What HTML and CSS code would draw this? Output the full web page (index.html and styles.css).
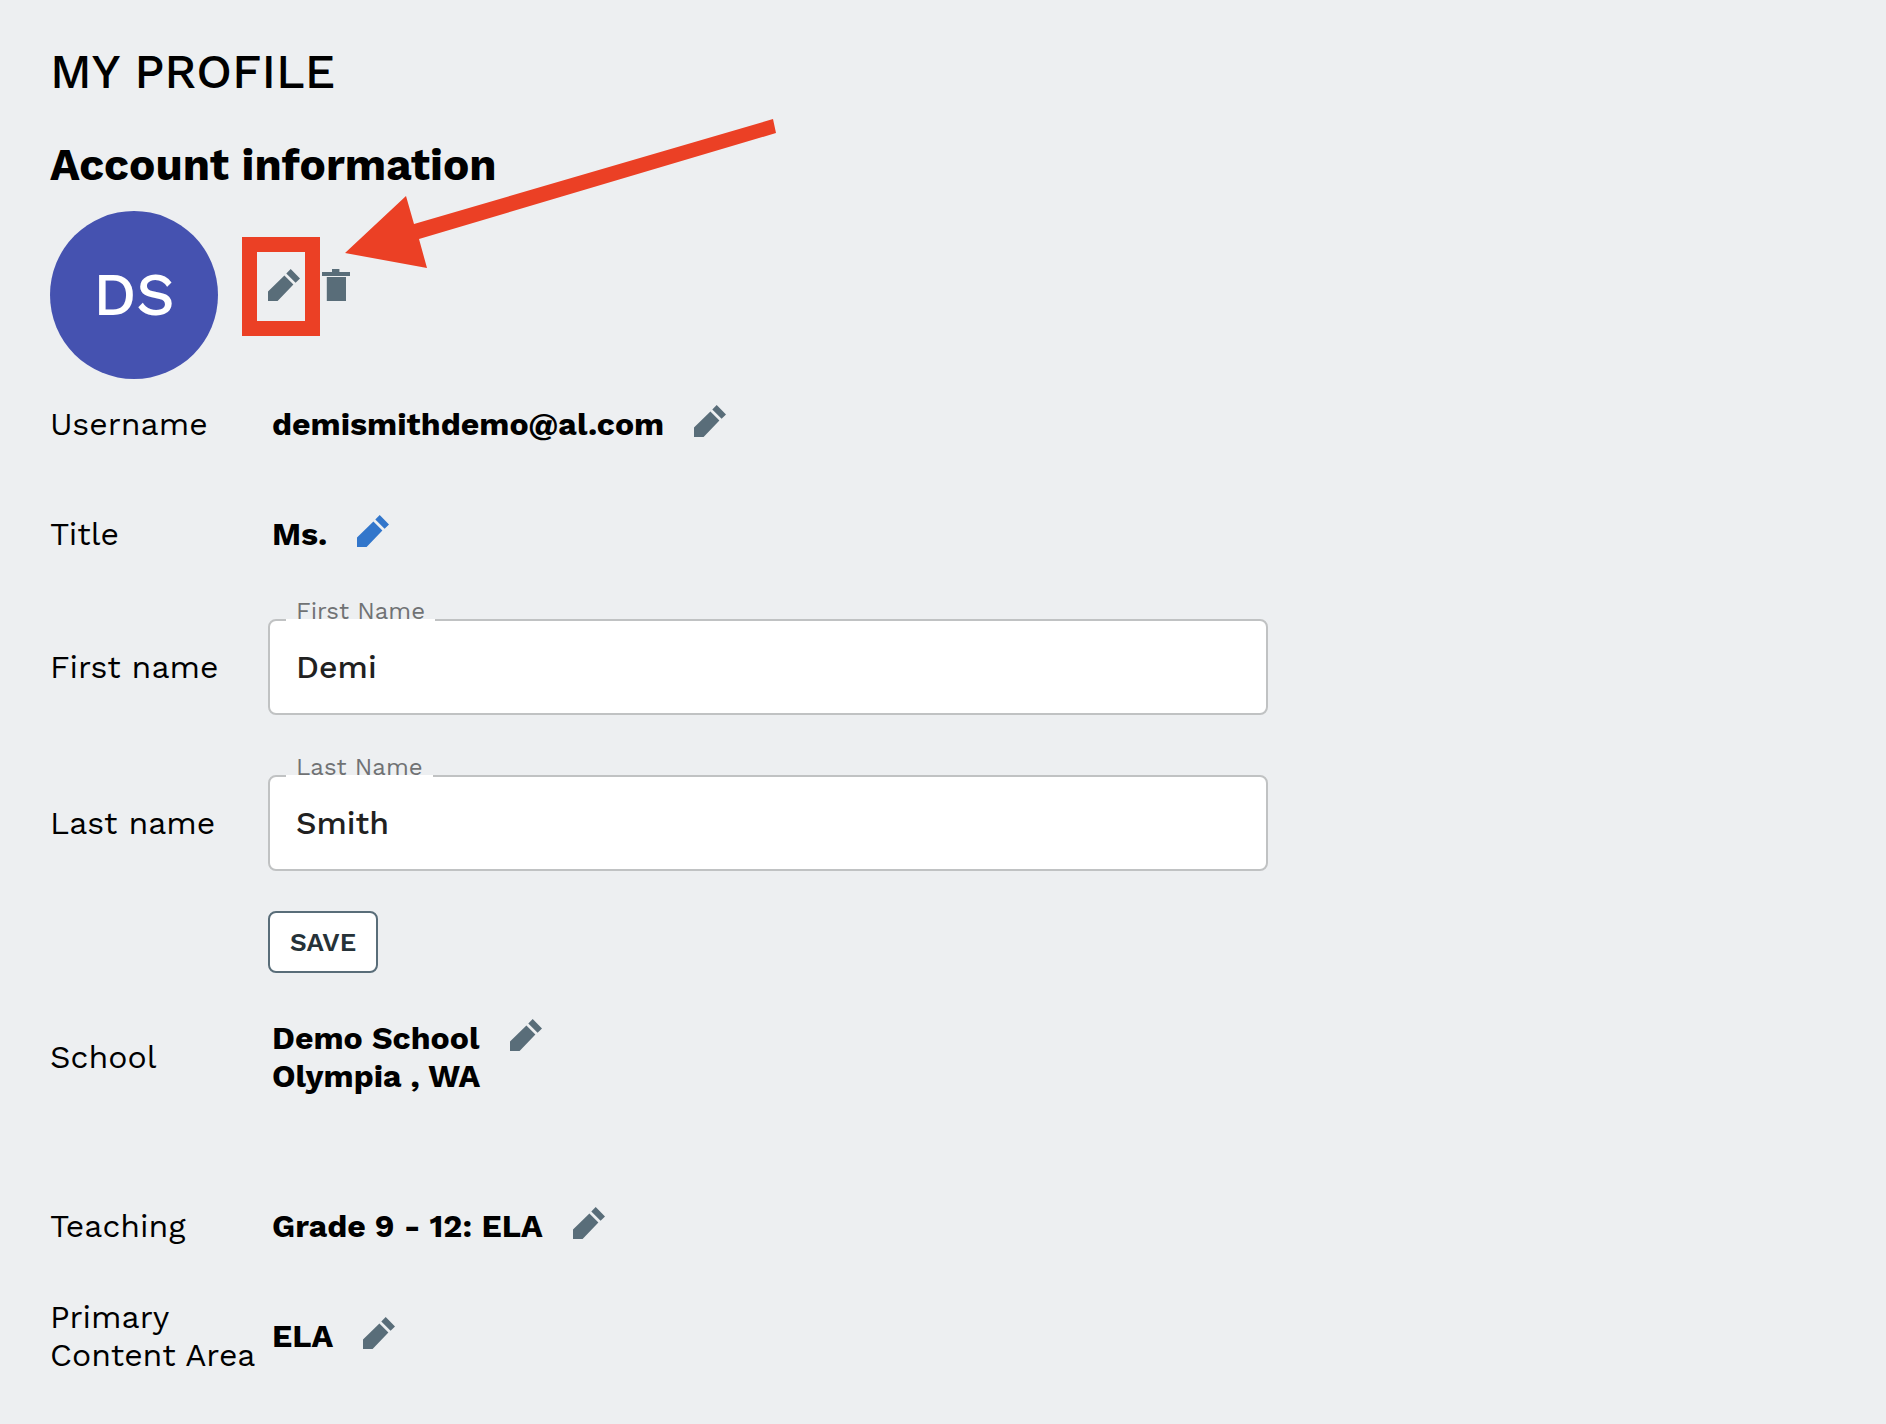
FILE: index.html
```html
<!DOCTYPE html>
<html lang="en">
<head>
<meta charset="utf-8">
<meta name="viewport" content="width=device-width, initial-scale=1">
<title>My Profile</title>
<link rel="stylesheet" href="styles.css">
</head>
<body>
<svg class="sprite" aria-hidden="true">
  <symbol id="pencil" viewBox="0 0 32 32">
    <path d="M0 22.4 16.4 6.6 25.4 15.6 9.6 32H0ZM18.3 4.6 22.7 0 32 9.4 27.6 13.8Z"/>
  </symbol>
  <symbol id="trash" viewBox="0 0 28 32">
    <path d="M10 0h7.4v3H28v4H0V3h10ZM4.8 8h19.2v24H4.8Z"/>
  </symbol>
</svg>
<main class="profile">
  <h1 class="page-title">MY PROFILE</h1>
  <h2 class="section-title">Account information</h2>

  <div class="photo">
    <div class="avatar">DS</div>
    <div class="photo-actions">
      <button class="icon-button highlighted" type="button" aria-label="Edit photo">
        <svg class="icon"><use href="#pencil"/></svg>
        <svg class="arrow" viewBox="0 0 432 150" aria-hidden="true">
          <path d="M0 134 61 77 69 105 428 0 431 14 74 120 82 149Z"/>
        </svg>
      </button>
      <button class="icon-button" type="button" aria-label="Delete photo">
        <svg class="icon icon-trash"><use href="#trash"/></svg>
      </button>
    </div>
  </div>

  <form class="rows">
    <div class="row">
      <span class="name">Username</span>
      <div class="value">demismithdemo@al.com
        <button class="icon-button" type="button" aria-label="Edit username"><svg class="icon"><use href="#pencil"/></svg></button>
      </div>
    </div>
    <div class="row">
      <span class="name">Title</span>
      <div class="value">Ms.
        <button class="icon-button active" type="button" aria-label="Edit title"><svg class="icon"><use href="#pencil"/></svg></button>
      </div>
    </div>
    <div class="row row-field">
      <label class="name" for="first-name">First name</label>
      <div class="field">
        <input class="input" id="first-name" type="text" value="Demi">
        <label class="float-label" for="first-name">First Name</label>
      </div>
    </div>
    <div class="row row-field">
      <label class="name" for="last-name">Last name</label>
      <div class="field">
        <input class="input" id="last-name" type="text" value="Smith">
        <label class="float-label" for="last-name">Last Name</label>
      </div>
    </div>
    <div class="row row-action">
      <button class="save" type="button">SAVE</button>
    </div>
    <div class="row row-school">
      <span class="name">School</span>
      <div class="value"><span>Demo School<br>Olympia , WA</span>
        <button class="icon-button" type="button" aria-label="Edit school"><svg class="icon"><use href="#pencil"/></svg></button>
      </div>
    </div>
    <div class="row">
      <span class="name">Teaching</span>
      <div class="value">Grade 9 - 12: ELA
        <button class="icon-button" type="button" aria-label="Edit teaching"><svg class="icon"><use href="#pencil"/></svg></button>
      </div>
    </div>
    <div class="row">
      <span class="name">Primary<br>Content Area</span>
      <div class="value">ELA
        <button class="icon-button" type="button" aria-label="Edit primary content area"><svg class="icon"><use href="#pencil"/></svg></button>
      </div>
    </div>
  </form>
</main>
</body>
</html>
```
FILE: styles.css
```css
*,
*::before,
*::after {
  box-sizing: border-box;
}

body {
  margin: 0;
  background: #edeff1;
  color: #000;
  font-family: "Work Sans", Inter, "Liberation Sans", sans-serif;
  font-size: 32px;
  line-height: 38px;
}

.sprite {
  position: absolute;
  width: 0;
  height: 0;
}

.profile {
  padding: 40px 50px;
}

.page-title {
  margin: 0;
  font-size: 48px;
  font-weight: 500;
  line-height: 64px;
}

.section-title {
  margin: 33px 0 18px;
  font-size: 44px;
  font-weight: 700;
  line-height: 56px;
}

.photo {
  display: flex;
  align-items: center;
  gap: 50px;
}

.avatar {
  display: flex;
  align-items: center;
  justify-content: center;
  width: 168px;
  height: 168px;
  border-radius: 50%;
  background: #4552b0;
  color: #fff;
  font-size: 60px;
  font-weight: 500;
}

.photo-actions {
  display: flex;
  gap: 22px;
  padding-bottom: 20px;
}

.icon-button {
  position: relative;
  display: flex;
  flex: none;
  padding: 0;
  border: 0;
  background: none;
  color: #596d79;
  cursor: pointer;
}

.icon-button.active {
  color: #3276cb;
}

.icon {
  width: 32px;
  height: 32px;
  fill: currentColor;
}

.icon-trash {
  width: 28px;
}

/* Callout frame and arrow drawn over the photo edit button */
.highlighted::after {
  content: "";
  position: absolute;
  top: -32px;
  left: -26px;
  width: 78px;
  height: 99px;
  border: 15px solid #eb4025;
}

.arrow {
  position: absolute;
  top: -150px;
  left: 77px;
  z-index: 1;
  width: 432px;
  height: 150px;
  fill: #eb4025;
  pointer-events: none;
}

.rows {
  display: flex;
  flex-direction: column;
  gap: 20px;
}

.row {
  display: grid;
  grid-template-columns: 218px minmax(0, 1000px);
  align-items: center;
  min-height: 90px;
}

.row-field {
  min-height: 136px;
}

.row-action {
  min-height: 0;
}

.row-school {
  min-height: 128px;
  margin-bottom: 40px;
}

.name {
  white-space: nowrap;
}

.value {
  display: flex;
  align-items: flex-start;
  gap: 30px;
  padding-left: 4px;
  font-weight: 700;
}

.field {
  position: relative;
}

.input {
  display: block;
  width: 100%;
  height: 96px;
  padding: 0 26px;
  border: 2px solid #c0c2c3;
  border-radius: 8px;
  background: #fff;
  color: #212121;
  font: inherit;
  font-weight: 500;
}

/* The white lower edge opens a notch in the input's top border */
.float-label {
  position: absolute;
  top: -18px;
  left: 18px;
  height: 20px;
  padding: 0 10px;
  border-bottom: 2px solid #fff;
  color: #707274;
  font-size: 24px;
  line-height: 20px;
}

.save {
  grid-column: 2;
  justify-self: start;
  height: 62px;
  padding: 0 20px;
  border: 2px solid #596d79;
  border-radius: 8px;
  background: #fff;
  color: #263238;
  font: inherit;
  font-size: 26px;
  font-weight: 600;
  cursor: pointer;
}
```
